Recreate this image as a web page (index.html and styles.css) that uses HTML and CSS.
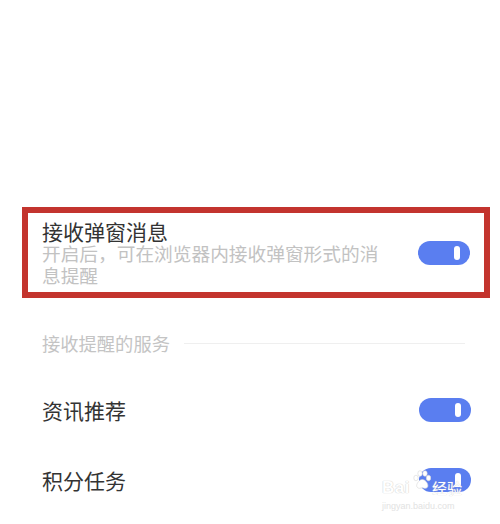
FILE: index.html
```html
<!DOCTYPE html>
<html lang="zh-CN">
<head>
<meta charset="utf-8">
<title>消息设置</title>
<link rel="stylesheet" href="styles.css">
</head>
<body>
<div class="page">
  <div class="highlight">
    <div class="popup-row">
      <div class="popup-text">
        <div class="title">接收弹窗消息</div>
        <div class="desc">开启后，可在浏览器内接收弹窗形式的消息提醒</div>
      </div>
      <div class="switch"><span class="knob"></span></div>
    </div>
  </div>

  <div class="section">
    <span class="section-label">接收提醒的服务</span>
    <span class="section-line"></span>
  </div>

  <div class="list">
    <div class="row">
      <span class="row-label">资讯推荐</span>
      <div class="switch"><span class="knob"></span></div>
    </div>
    <div class="row">
      <span class="row-label">积分任务</span>
      <div class="switch"><span class="knob"></span></div>
    </div>
  </div>

  <div class="watermark">
    <div class="wm-top">
      <span class="wm-bai">Bai</span>
      <svg class="wm-paw" width="18" height="20" viewBox="0 0 18 20">
        <ellipse cx="3" cy="8" rx="2.2" ry="2.8" fill="#fff" stroke="#d6d6d6" stroke-width="0.6"/>
        <ellipse cx="7" cy="3.5" rx="2.2" ry="2.8" fill="#fff" stroke="#d6d6d6" stroke-width="0.6"/>
        <ellipse cx="12" cy="3.5" rx="2.2" ry="2.8" fill="#fff" stroke="#d6d6d6" stroke-width="0.6"/>
        <ellipse cx="15.5" cy="8" rx="2.2" ry="2.8" fill="#fff" stroke="#d6d6d6" stroke-width="0.6"/>
        <path d="M9.3 9.5c-2.6 0-5.6 3.4-5.6 6.2 0 1.8 1.4 2.6 3 2.6 1.1 0 1.8-.5 2.6-.5s1.5.5 2.6.5c1.6 0 3-.8 3-2.6 0-2.8-3-6.2-5.6-6.2z" fill="#fff" stroke="#d6d6d6" stroke-width="0.6"/>
      </svg>
      <span class="wm-jy">经验</span>
    </div>
    <div class="wm-url">jingyan.baidu.com</div>
  </div>
</div>
</body>
</html>
```

FILE: styles.css
```css
html, body {
  margin: 0;
  padding: 0;
  background: #ffffff;
}

body {
  font-family: "Noto Sans CJK SC", "Noto Sans", sans-serif;
  width: 500px;
  height: 524px;
  overflow: hidden;
}

.page {
  position: relative;
  width: 500px;
  height: 524px;
  padding-top: 207px;
  box-sizing: border-box;
}

.highlight {
  margin-left: 22px;
  width: 468px;
  height: 91px;
  box-sizing: border-box;
  border: 6px solid #c3342e;
}

.popup-row {
  display: flex;
  align-items: center;
  justify-content: space-between;
  height: 100%;
  padding: 0 14px 0 14px;
  box-sizing: border-box;
}

.popup-text {
  width: 345px;
  padding-top: 1px;
}

.title {
  font-size: 21px;
  line-height: 22px;
  color: #333333;
}

.desc {
  font-size: 18.7px;
  line-height: 22px;
  color: #c2c2c2;
}

.switch {
  width: 52px;
  height: 24px;
  border-radius: 12px;
  background: #5a7ef0;
  display: flex;
  align-items: center;
  justify-content: flex-end;
  padding-right: 10px;
  box-sizing: border-box;
  flex-shrink: 0;
}

.knob {
  width: 6px;
  height: 14px;
  border-radius: 3px;
  background: #ffffff;
}

.section {
  display: flex;
  align-items: center;
  height: 22px;
  margin-top: 34px;
  padding: 0 35px 0 42px;
}

.section-label {
  font-size: 18.3px;
  line-height: 22px;
  color: #c4c4c4;
  white-space: nowrap;
  margin-right: 14px;
}

.section-line {
  flex: 1;
  height: 1px;
  background: #efefef;
}

.list {
  margin-top: 21px;
}

.row {
  display: flex;
  align-items: center;
  justify-content: space-between;
  height: 70px;
  padding: 0 29px 0 42px;
}

.row-label {
  font-size: 21px;
  line-height: 22px;
  color: #333333;
}

.watermark {
  position: absolute;
  left: 382px;
  top: 468px;
  width: 100px;
}

.wm-top {
  display: flex;
  align-items: flex-end;
  height: 28px;
}

.wm-bai {
  font-family: "Liberation Sans", sans-serif;
  font-size: 17px;
  font-weight: bold;
  line-height: 17px;
  color: #ffffff;
  text-shadow: 0 0 1px #cfcfcf, 0 0 1px #cfcfcf;
  letter-spacing: 0.5px;
}

.wm-paw {
  margin-left: 3px;
  margin-bottom: 6px;
}

.wm-jy {
  font-size: 15px;
  line-height: 17px;
  color: #ffffff;
  text-shadow: 0 0 1px #c8c8c8;
  margin-left: 1px;
}

.wm-url {
  font-family: "Liberation Sans", sans-serif;
  font-size: 9px;
  line-height: 12px;
  color: #e2e2e2;
  margin-top: 4px;
}
```
